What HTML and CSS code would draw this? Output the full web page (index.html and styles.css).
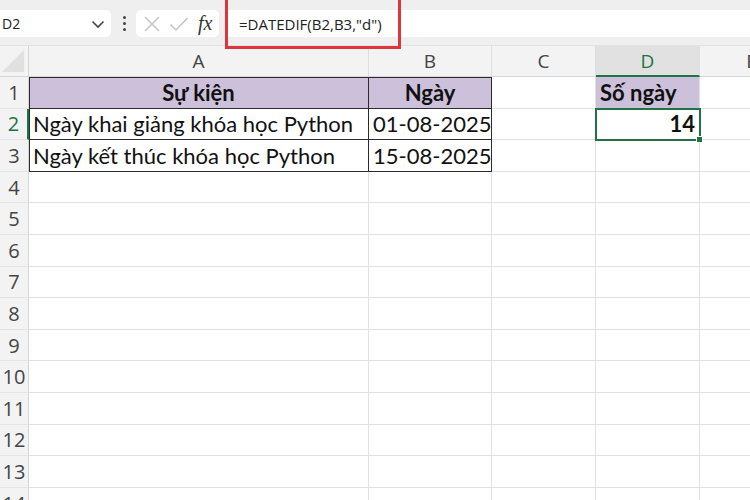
FILE: index.html
```html
<!DOCTYPE html>
<html lang="vi">
<head>
    <meta charset="UTF-8">
    <meta name="viewport" content="width=device-width, initial-scale=1.0">
    <title>DATEDIF</title>
    <link rel="stylesheet" href="styles.css">
</head>
<body>

<div class="toolbar">
    <div class="namebox">
        <span>D2</span>
        <svg class="chevron" width="14" height="9" viewBox="0 0 14 9"><path d="M1.5 1.5 L7 7 L12.5 1.5" fill="none" stroke="#444" stroke-width="1.6"/></svg>
    </div>
    <div class="kebab">
        <span></span><span></span><span></span>
    </div>
    <div class="fx-buttons">
        <svg width="18" height="18" viewBox="0 0 18 18"><path d="M2 2 L16 16 M16 2 L2 16" stroke="#c4c4c4" stroke-width="1.5"/></svg>
        <svg width="20" height="18" viewBox="0 0 20 18"><path d="M1.5 9.5 L7 15 L18.5 3" fill="none" stroke="#c4c4c4" stroke-width="1.5"/></svg>
        <span class="fx">fx</span>
    </div>
    <div class="formula">
        <span class="formula-text">=DATEDIF(B2,B3,"d")</span>
        <div class="highlight"></div>
    </div>
</div>

<div class="sheet" id="sheet">
    <div class="corner"><span class="triangle"></span></div>
    <div class="col-head">A</div>
    <div class="col-head">B</div>
    <div class="col-head">C</div>
    <div class="col-head active">D</div>
    <div class="col-head">E</div>

    <div class="row-head">1</div>
    <div class="cell table left top head">Sự kiện</div>
    <div class="cell table top head">Ngày</div>
    <div class="cell"></div>
    <div class="cell fill bold">Số ngày</div>
    <div class="cell"></div>

    <div class="row-head active">2</div>
    <div class="cell table left">Ngày khai giảng khóa học Python</div>
    <div class="cell table">01-08-2025</div>
    <div class="cell"></div>
    <div class="cell bold right selected">14<span class="handle"></span></div>
    <div class="cell"></div>

    <div class="row-head">3</div>
    <div class="cell table left">Ngày kết thúc khóa học Python</div>
    <div class="cell table">15-08-2025</div>
    <div class="cell"></div>
    <div class="cell"></div>
    <div class="cell"></div>
</div>

<script>
    // Empty rows below the data
    const sheet = document.getElementById("sheet");
    for (let r = 4; r <= 14; r++) {
        const head = document.createElement("div");
        head.className = "row-head";
        head.textContent = r;
        sheet.appendChild(head);
        for (let c = 0; c < 5; c++) {
            const cell = document.createElement("div");
            cell.className = "cell";
            sheet.appendChild(cell);
        }
    }
</script>

</body>
</html>
```

FILE: styles.css
```css
body {
    margin: 0;
    padding: 0;
    background-color: #ffffff;
    font-family: Lato, "Open Sans", sans-serif;
    overflow: hidden;
    width: 750px;
    height: 500px;
}

/* Formula bar */
.toolbar {
    display: flex;
    align-items: center;
    height: 46px;
    background-color: #efefef;
    border-bottom: 1px solid #e2e2e2;
    box-sizing: border-box;
    padding-top: 2px;
}
.namebox {
    display: flex;
    align-items: center;
    justify-content: space-between;
    width: 111px;
    height: 27px;
    box-sizing: border-box;
    padding: 0 6px 0 2px;
    background-color: #fff;
    border-radius: 0 5px 5px 0;
    font-family: "Open Sans", sans-serif;
    font-size: 14px;
    color: #222;
}
.chevron {
    margin-top: 1px;
}
.kebab {
    display: flex;
    flex-direction: column;
    gap: 3px;
    margin: 0 10px 0 12px;
}
.kebab span {
    width: 3px;
    height: 3px;
    background-color: #444;
    border-radius: 50%;
}
.fx-buttons {
    display: flex;
    align-items: center;
    gap: 8px;
    width: 83px;
    height: 27px;
    box-sizing: border-box;
    padding: 0 6px 0 7px;
    background-color: #fff;
    border-radius: 5px;
}
.fx {
    font-family: "Liberation Serif", serif;
    font-style: italic;
    font-size: 20px;
    color: #333;
    margin-left: 1px;
}
.formula {
    position: relative;
    flex: 1;
    height: 27px;
    margin-left: 8px;
    background-color: #fff;
    display: flex;
    align-items: center;
    padding-left: 12px;
    font-family: "Open Sans", sans-serif;
    font-size: 15px;
    color: #222;
}
.highlight {
    position: absolute;
    left: -2px;
    top: -14px;
    width: 176px;
    height: 53px;
    box-sizing: border-box;
    border: 3px solid #e0353a;
}

/* Grid */
.sheet {
    display: grid;
    grid-template-columns: 29px 340px 123px 104px 104px 104px;
    grid-template-rows: 31px;
    grid-auto-rows: 31.6px;
    font-size: 22px;
    color: #111;
}
.corner {
    position: relative;
    background-color: #f3f3f3;
    border-right: 1px solid #d6d6d6;
    border-bottom: 1px solid #d6d6d6;
}
.triangle {
    position: absolute;
    right: 4px;
    bottom: 4px;
    width: 0;
    height: 0;
    border-left: 22px solid transparent;
    border-bottom: 22px solid #e0e0e0;
}
.col-head {
    display: flex;
    align-items: center;
    justify-content: center;
    background-color: #f3f3f3;
    border-right: 1px solid #dedede;
    border-bottom: 1px solid #d6d6d6;
    font-family: "Open Sans", sans-serif;
    font-size: 19px;
    color: #444;
}
.col-head.active {
    background-color: #e1e1e1;
    color: #217346;
    border-bottom: 2px solid #217346;
}
.row-head {
    display: flex;
    align-items: center;
    justify-content: center;
    background-color: #f3f3f3;
    border-right: 1px solid #d6d6d6;
    border-bottom: 1px solid #e4e4e4;
    font-family: "Open Sans", sans-serif;
    font-size: 20px;
    color: #444;
    box-sizing: border-box;
}
.row-head.active {
    color: #217346;
    border-right: 2px solid #217346;
}
.cell {
    display: flex;
    align-items: center;
    padding: 0 4px;
    white-space: nowrap;
    overflow: visible;
    border-right: 1px solid #e1e1e1;
    border-bottom: 1px solid #e1e1e1;
    box-sizing: border-box;
}
.table {
    border-right: 1px solid #2b2b2b;
    border-bottom: 1px solid #2b2b2b;
}
.table.left {
    box-shadow: inset 1px 0 #2b2b2b;
}
.table.top {
    box-shadow: inset 0 1px #2b2b2b;
}
.table.left.top {
    box-shadow: inset 1px 1px #2b2b2b;
}
.head {
    justify-content: center;
    font-weight: bold;
    background-color: #ccc0da;
}
.fill {
    background-color: #ccc0da;
}
.bold {
    font-weight: bold;
}
.right {
    justify-content: flex-end;
}
.selected {
    position: relative;
    outline: 2px solid #217346;
    outline-offset: -1px;
    z-index: 1;
}
.handle {
    position: absolute;
    right: -4px;
    bottom: -4px;
    width: 5px;
    height: 5px;
    background-color: #217346;
    border: 1px solid #fff;
}
```
